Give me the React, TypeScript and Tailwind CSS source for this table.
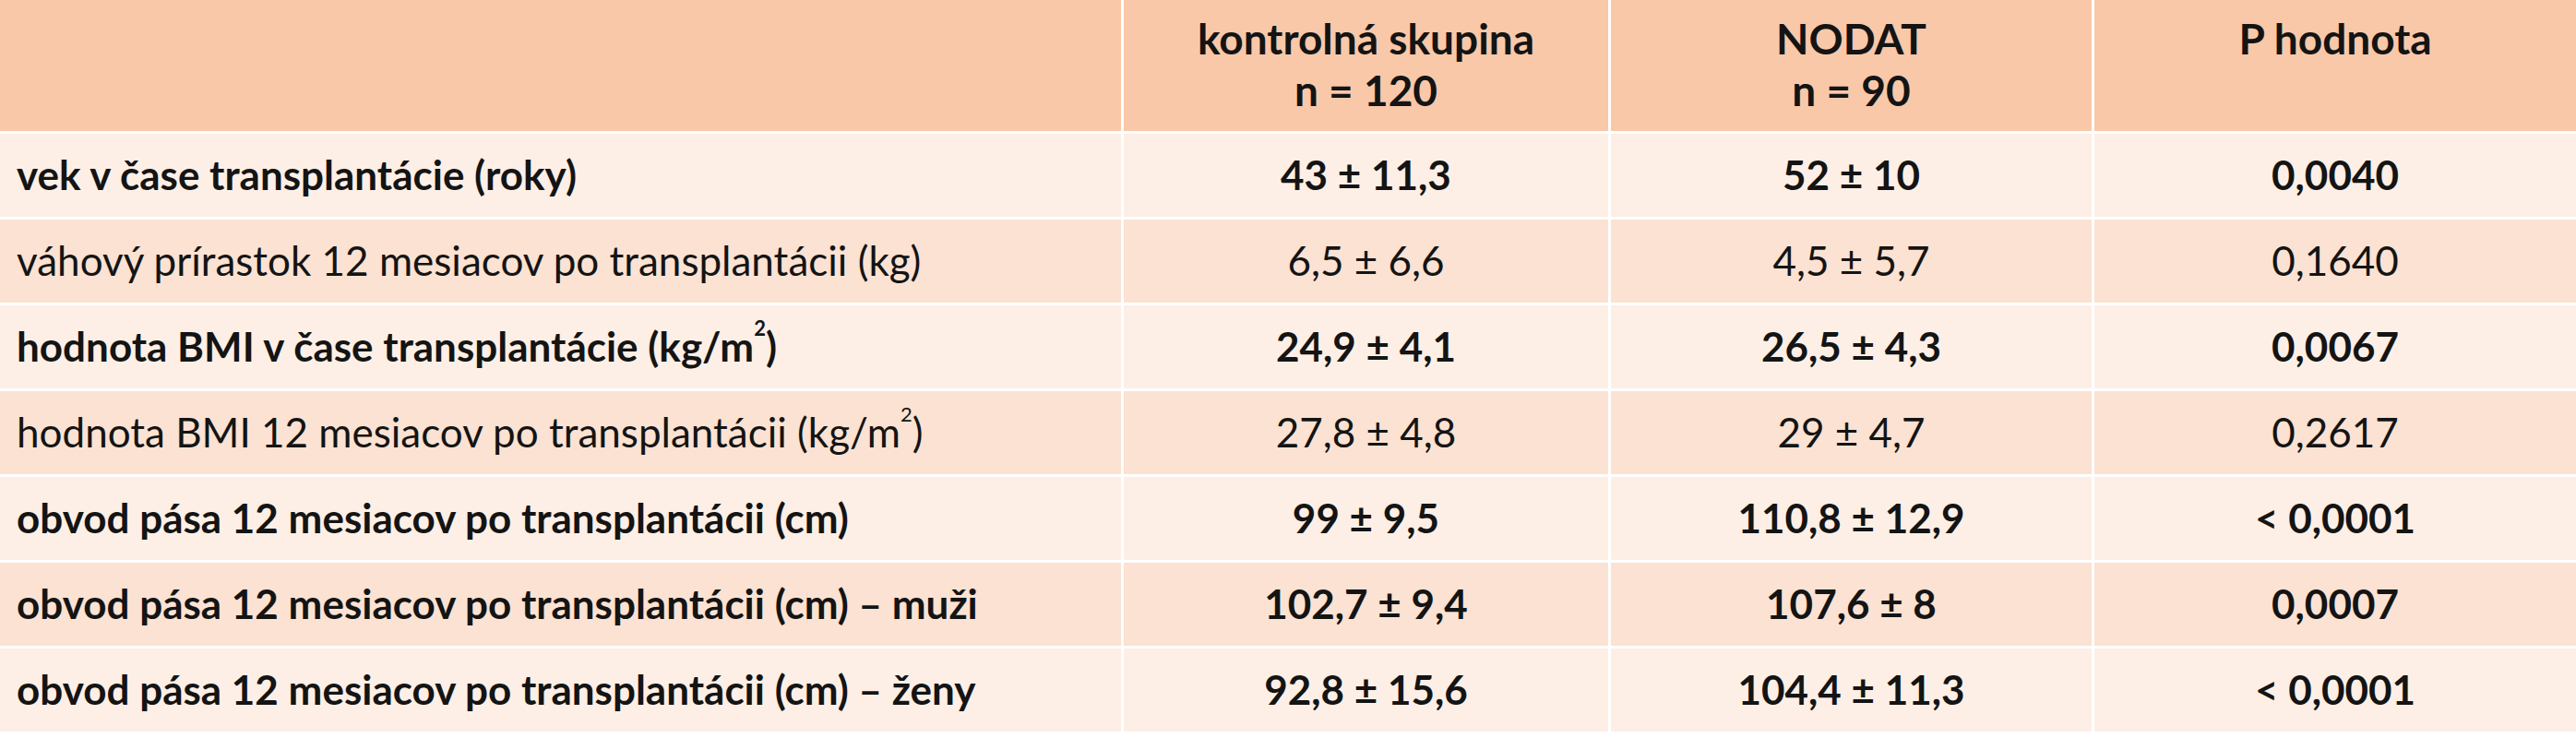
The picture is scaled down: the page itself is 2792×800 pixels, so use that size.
import type { ReactNode } from 'react';

type Row = {
  label: ReactNode;
  control: string;
  nodat: string;
  p: string;
  bold: boolean;
};

const M2 = (
  <>
    m<sup className="text-[0.5em] align-[0.75em]">2</sup>
  </>
);

const ROWS: Row[] = [
  { label: 'vek v čase transplantácie (roky)', control: '43 ± 11,3', nodat: '52 ± 10', p: '0,0040', bold: true },
  { label: 'váhový prírastok 12 mesiacov po transplantácii (kg)', control: '6,5 ± 6,6', nodat: '4,5 ± 5,7', p: '0,1640', bold: false },
  { label: <>hodnota BMI v čase transplantácie (kg/{M2})</>, control: '24,9 ± 4,1', nodat: '26,5 ± 4,3', p: '0,0067', bold: true },
  { label: <>hodnota BMI 12 mesiacov po transplantácii (kg/{M2})</>, control: '27,8 ± 4,8', nodat: '29 ± 4,7', p: '0,2617', bold: false },
  { label: 'obvod pása 12 mesiacov po transplantácii (cm)', control: '99 ± 9,5', nodat: '110,8 ± 12,9', p: '< 0,0001', bold: true },
  { label: 'obvod pása 12 mesiacov po transplantácii (cm) – muži', control: '102,7 ± 9,4', nodat: '107,6 ± 8', p: '0,0007', bold: true },
  { label: 'obvod pása 12 mesiacov po transplantácii (cm) – ženy', control: '92,8 ± 15,6', nodat: '104,4 ± 11,3', p: '< 0,0001', bold: true },
];

function HeadCell({ lines }: { readonly lines: string[] }) {
  return (
    <div className="flex flex-col items-center bg-[#f9c8a9] pt-[14px] text-[46px] font-bold leading-[56px]">
      {lines.map((l) => (
        <span key={l}>{l}</span>
      ))}
    </div>
  );
}

export default function App() {
  return (
    <div className="h-[800px] w-[2792px] bg-white font-['Lato','Liberation_Sans',sans-serif] text-[44px] text-[#141414]">
      <div className="grid grid-cols-[1215px_525px_521px_522px] grid-rows-[142px_repeat(7,90px)] gap-[3px]">
        <div className="bg-[#f9c8a9]" />
        <HeadCell lines={['kontrolná skupina', 'n = 120']} />
        <HeadCell lines={['NODAT', 'n = 90']} />
        <HeadCell lines={['P hodnota']} />
        {ROWS.map((r, i) => {
          const bg = i % 2 === 0 ? 'bg-[#fdefe6]' : 'bg-[#fbe2d2]';
          const weight = r.bold ? 'font-bold' : 'font-normal';
          return [
            <div key={`${i}-l`} className={`flex items-center pb-[3px] pl-[18px] ${bg} ${weight}`}>
              <span>{r.label}</span>
            </div>,
            <div key={`${i}-c`} className={`flex items-center justify-center pb-[3px] ${bg} ${weight}`}>
              {r.control}
            </div>,
            <div key={`${i}-n`} className={`flex items-center justify-center pb-[3px] ${bg} ${weight}`}>
              {r.nodat}
            </div>,
            <div key={`${i}-p`} className={`flex items-center justify-center pb-[3px] ${bg} ${weight}`}>
              {r.p}
            </div>,
          ];
        })}
      </div>
    </div>
  );
}
